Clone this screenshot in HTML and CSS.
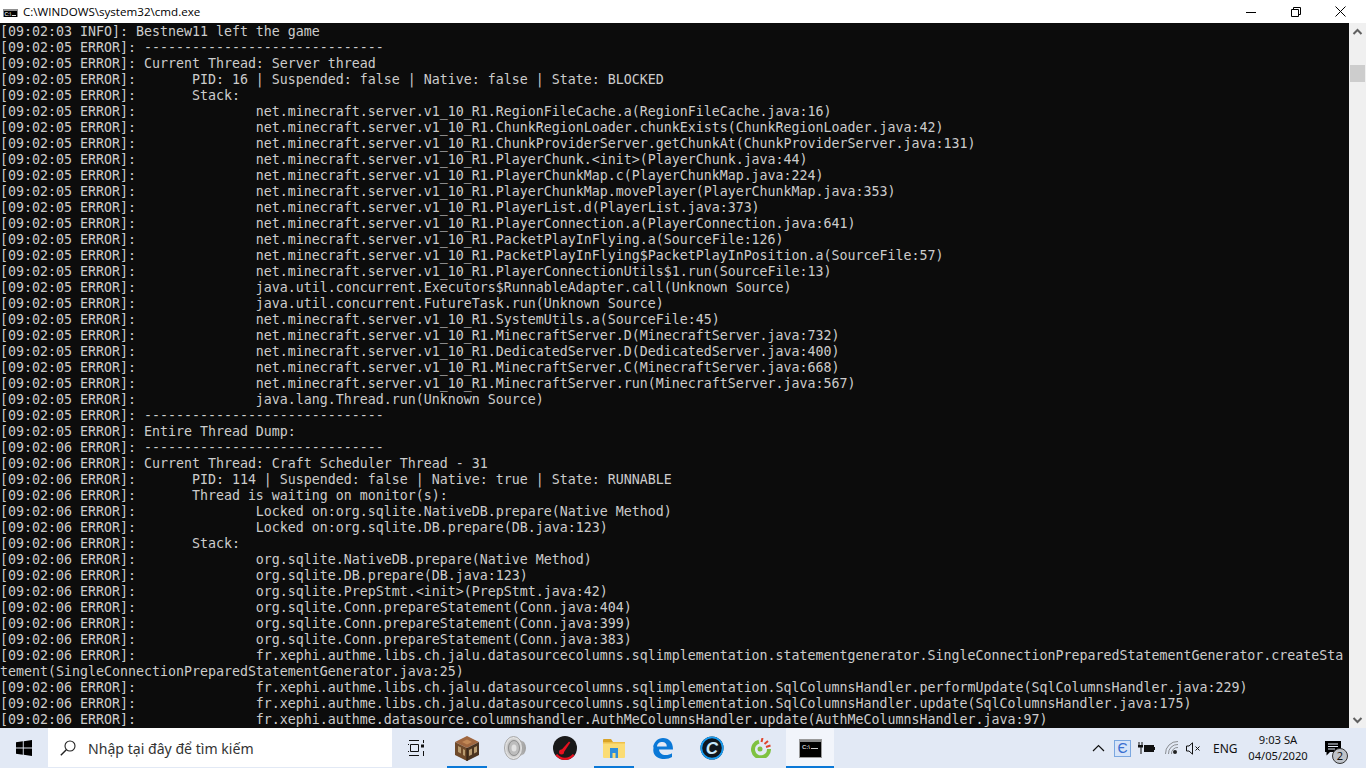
FILE: index.html
```html
<!DOCTYPE html>
<html lang="vi">
<head>
<meta charset="utf-8">
<title>cmd.exe</title>
<link rel="stylesheet" href="styles.css">
</head>
<body>
<div class="window">
  <header class="titlebar">
    <svg class="app-icon" viewBox="0 0 15 8" width="15" height="8"><rect width="15" height="8" fill="#8f8f8f"/><rect x="1" y="2" width="13" height="6" fill="#000"/><text x="1.500" y="7" font-size="5" font-family="Liberation Sans" font-weight="700" fill="#ddd">C:\</text><rect x="9" y="6" width="4" height="1" fill="#ddd"/></svg>
    <span class="title">C:\WINDOWS\system32\cmd.exe</span>
    <div class="controls">
      <span class="ctl"><svg width="10" height="10" viewBox="0 0 10 10"><path d="M0 5.500h10" stroke="#000" fill="none"/></svg></span>
      <span class="ctl"><svg width="10" height="10" viewBox="0 0 10 10"><path d="M.5 2.500h7v7h-7zM2.500 2.500v-2h7v7h-2" stroke="#000" fill="none"/></svg></span>
      <span class="ctl"><svg width="11" height="11" viewBox="0 0 11 11"><path d="M.5.5l10 10M10.500.5l-10 10" stroke="#000" fill="none"/></svg></span>
    </div>
  </header>
  <div class="client">
<pre class="console">[09:02:03 INFO]: Bestnew11 left the game
[09:02:05 ERROR]: ------------------------------
[09:02:05 ERROR]: Current Thread: Server thread
[09:02:05 ERROR]:       PID: 16 | Suspended: false | Native: false | State: BLOCKED
[09:02:05 ERROR]:       Stack:
[09:02:05 ERROR]:               net.minecraft.server.v1_10_R1.RegionFileCache.a(RegionFileCache.java:16)
[09:02:05 ERROR]:               net.minecraft.server.v1_10_R1.ChunkRegionLoader.chunkExists(ChunkRegionLoader.java:42)
[09:02:05 ERROR]:               net.minecraft.server.v1_10_R1.ChunkProviderServer.getChunkAt(ChunkProviderServer.java:131)
[09:02:05 ERROR]:               net.minecraft.server.v1_10_R1.PlayerChunk.&lt;init&gt;(PlayerChunk.java:44)
[09:02:05 ERROR]:               net.minecraft.server.v1_10_R1.PlayerChunkMap.c(PlayerChunkMap.java:224)
[09:02:05 ERROR]:               net.minecraft.server.v1_10_R1.PlayerChunkMap.movePlayer(PlayerChunkMap.java:353)
[09:02:05 ERROR]:               net.minecraft.server.v1_10_R1.PlayerList.d(PlayerList.java:373)
[09:02:05 ERROR]:               net.minecraft.server.v1_10_R1.PlayerConnection.a(PlayerConnection.java:641)
[09:02:05 ERROR]:               net.minecraft.server.v1_10_R1.PacketPlayInFlying.a(SourceFile:126)
[09:02:05 ERROR]:               net.minecraft.server.v1_10_R1.PacketPlayInFlying$PacketPlayInPosition.a(SourceFile:57)
[09:02:05 ERROR]:               net.minecraft.server.v1_10_R1.PlayerConnectionUtils$1.run(SourceFile:13)
[09:02:05 ERROR]:               java.util.concurrent.Executors$RunnableAdapter.call(Unknown Source)
[09:02:05 ERROR]:               java.util.concurrent.FutureTask.run(Unknown Source)
[09:02:05 ERROR]:               net.minecraft.server.v1_10_R1.SystemUtils.a(SourceFile:45)
[09:02:05 ERROR]:               net.minecraft.server.v1_10_R1.MinecraftServer.D(MinecraftServer.java:732)
[09:02:05 ERROR]:               net.minecraft.server.v1_10_R1.DedicatedServer.D(DedicatedServer.java:400)
[09:02:05 ERROR]:               net.minecraft.server.v1_10_R1.MinecraftServer.C(MinecraftServer.java:668)
[09:02:05 ERROR]:               net.minecraft.server.v1_10_R1.MinecraftServer.run(MinecraftServer.java:567)
[09:02:05 ERROR]:               java.lang.Thread.run(Unknown Source)
[09:02:05 ERROR]: ------------------------------
[09:02:05 ERROR]: Entire Thread Dump:
[09:02:06 ERROR]: ------------------------------
[09:02:06 ERROR]: Current Thread: Craft Scheduler Thread - 31
[09:02:06 ERROR]:       PID: 114 | Suspended: false | Native: true | State: RUNNABLE
[09:02:06 ERROR]:       Thread is waiting on monitor(s):
[09:02:06 ERROR]:               Locked on:org.sqlite.NativeDB.prepare(Native Method)
[09:02:06 ERROR]:               Locked on:org.sqlite.DB.prepare(DB.java:123)
[09:02:06 ERROR]:       Stack:
[09:02:06 ERROR]:               org.sqlite.NativeDB.prepare(Native Method)
[09:02:06 ERROR]:               org.sqlite.DB.prepare(DB.java:123)
[09:02:06 ERROR]:               org.sqlite.PrepStmt.&lt;init&gt;(PrepStmt.java:42)
[09:02:06 ERROR]:               org.sqlite.Conn.prepareStatement(Conn.java:404)
[09:02:06 ERROR]:               org.sqlite.Conn.prepareStatement(Conn.java:399)
[09:02:06 ERROR]:               org.sqlite.Conn.prepareStatement(Conn.java:383)
[09:02:06 ERROR]:               fr.xephi.authme.libs.ch.jalu.datasourcecolumns.sqlimplementation.statementgenerator.SingleConnectionPreparedStatementGenerator.createSta
tement(SingleConnectionPreparedStatementGenerator.java:25)
[09:02:06 ERROR]:               fr.xephi.authme.libs.ch.jalu.datasourcecolumns.sqlimplementation.SqlColumnsHandler.performUpdate(SqlColumnsHandler.java:229)
[09:02:06 ERROR]:               fr.xephi.authme.libs.ch.jalu.datasourcecolumns.sqlimplementation.SqlColumnsHandler.update(SqlColumnsHandler.java:175)
[09:02:06 ERROR]:               fr.xephi.authme.datasource.columnshandler.AuthMeColumnsHandler.update(AuthMeColumnsHandler.java:97)</pre>
    <aside class="scrollbar">
      <svg class="arrow" width="17" height="17" viewBox="0 0 17 17"><path d="M4.500 11l4-4 4 4" stroke="#606060" stroke-width="2" fill="none"/></svg>
      <div class="track"><div class="thumb"></div></div>
      <svg class="arrow" width="17" height="17" viewBox="0 0 17 17"><path d="M4.500 7l4 4 4-4" stroke="#606060" stroke-width="2" fill="none"/></svg>
    </aside>
  </div>
  <footer class="taskbar">
    <button class="start"><svg width="16" height="16" viewBox="0 0 16 16"><path d="M0 2.300L6.800 1.300V7.600H0zM7.700 1.200L16 0V7.600H7.700zM0 8.400H6.800V14.700L0 13.700zM7.700 8.400H16V16L7.700 14.800z" fill="#000"/></svg></button>
    <div class="search">
      <svg width="16" height="16" viewBox="0 0 16 16"><circle cx="10" cy="6" r="5" fill="none" stroke="#222" stroke-width="1.100"/><path d="M6.300 9.700L.8 15.300" stroke="#222" stroke-width="1.400"/></svg>
      <span>Nhập tại đây để tìm kiếm</span>
    </div>
    <div class="apps">
      <span class="app task-view"><svg width="16" height="16" viewBox="0 0 16 16"><path d="M1 .5h10M1 15.500h10M2.500 4.500h8v7h-8zM0 4.500h1M0 11.500h1M15.500 0v3M15.500 11v5" fill="none" stroke="#111"/><rect x="13" y="4.500" width="3" height="3" fill="#111"/></svg></span>
      <span class="app open"><svg width="24" height="25" viewBox="0 0 24 25"><path d="M12 0l12 6-12 6L0 6z" fill="#a0673f"/><path d="M0 6l12 6v13L0 19z" fill="#6f4a2a"/><path d="M24 6l-12 6v13l12-6z" fill="#4b3420"/><path d="M3 10l3 1.500v6L3 16zM8 13l2 1v6l-2-1zM14 14l3-1.500v6l-3 1.500zM19 11.500l3-1.500v6l-3 1.500z" fill="#b79a6e"/><path d="M7 6l5 2.500L17 6l-5-2.500z" fill="#c08755"/><path d="M12 12v13" stroke="#2a1c10"/></svg></span>
      <span class="app"><svg width="24" height="24" viewBox="0 0 24 24"><defs><linearGradient id="sb" x1="0" x2="1"><stop offset="0" stop-color="#d8d8d8"/><stop offset="1" stop-color="#9d9d9d"/></linearGradient><radialGradient id="sp"><stop offset="0" stop-color="#e6e6e6"/><stop offset=".55" stop-color="#b4b4b4"/><stop offset="1" stop-color="#f2f2f2"/></radialGradient></defs><path d="M10 1l10 5q4 6 0 12l-10 5z" fill="url(#sb)"/><ellipse cx="9.500" cy="12" rx="9" ry="11.500" fill="url(#sp)" stroke="#a5a5a5"/><ellipse cx="10" cy="12" rx="5.500" ry="7.500" fill="#bdbdbd" stroke="#8f8f8f"/><ellipse cx="10" cy="12" rx="2.500" ry="3.500" fill="#e2e2e2"/></svg></span>
      <span class="app"><svg width="24" height="24" viewBox="0 0 24 24"><circle cx="12" cy="12" r="12" fill="#191919"/><path d="M2.500 19.300a12 12 0 0 0 19 0l-1.700-1.200a10 10 0 0 1-15.600 0z" fill="#e8101f"/><path d="M7.500 15l8.500-9.500 1.300 1L10 17.500z" fill="#e8101f"/><circle cx="8.500" cy="16" r="2.500" fill="#e8101f"/></svg></span>
      <span class="app open"><svg width="22" height="19" viewBox="0 0 22 19"><path d="M0 1q0-1 1-1h7l2 3H0z" fill="#d9a326"/><path d="M0 3h22v15q0 1-1 1H1q-1 0-1-1z" fill="#fbdc74"/><path d="M0 3h22v1.500H0z" fill="#eec04a"/><path d="M7 9h8v10h-2.500v-5h-3v5H7z" fill="#2f8edb"/></svg></span>
      <span class="app"><svg width="21" height="21" viewBox="0 0 21 21"><path d="M1 10C1.500 4 6 0 11 0c6 0 10 4 10 11.500H7c.3 3.500 3 5.500 6.500 5.500 2.500 0 5-.8 6.500-1.800v3.800C18 20.300 15.500 21 12.500 21 5 21-.5 16 1.800 9 3 5.800 5 4.800 7.500 4.200 5.500 6 5 7.300 5 8.500h9.800C14.800 5.500 13 4 10.500 4 6.500 4 3 6.500 1 10z" fill="#0a78d7"/></svg></span>
      <span class="app"><svg width="24" height="24" viewBox="0 0 24 24"><circle cx="12" cy="12" r="11.500" fill="#10171e"/><circle cx="12" cy="12" r="10.700" fill="none" stroke="#1a9cf0" stroke-width="1.800"/><text x="12" y="18" text-anchor="middle" font-family="Liberation Sans" font-weight="700" font-style="italic" font-size="17" fill="#c8e8fb">C</text></svg></span>
      <span class="app"><svg width="20" height="20" viewBox="0 0 20 20"><path d="M8 3.600A8 8 0 1 0 18 11" fill="none" stroke="#7fc241" stroke-width="4"/><circle cx="9" cy="11" r="2.500" fill="#7fc241"/><path d="M10.500 4l1-4M13.500 6l3.500-3M15 9l4.500-1.500" stroke="#e0452c" stroke-width="2"/></svg></span>
      <span class="app active open"><svg width="23" height="19" viewBox="0 0 23 19"><rect x=".5" y=".5" width="22" height="18" fill="#000" stroke="#9a9a9a"/><rect x="1" y="1" width="21" height="2" fill="#8a8a8a"/><text x="3" y="10" font-size="6" font-family="Liberation Sans" font-weight="700" fill="#ccc">C:\</text><rect x="12" y="9" width="7" height="1" fill="#ccc"/></svg></span>
    </div>
    <div class="tray">
      <svg class="t-chevron" width="13" height="8" viewBox="0 0 13 8"><path d="M1 7l5.500-5.500L12 7" fill="none" stroke="#111" stroke-width="1.200"/></svg>
      <span class="t-e">Є</span>
      <svg class="t-batt" width="17" height="12" viewBox="0 0 17 12"><path d="M0 3h5v2.500H3.500v6.500h-1V5.500H0z" fill="#111"/><path d="M1 0v3M4 0v3" stroke="#111"/><rect x="6" y="3" width="10" height="7" fill="#111"/><rect x="16" y="5" width="1" height="3" fill="#111"/></svg>
      <svg class="t-wifi" width="14" height="14" viewBox="0 0 14 14"><path d="M.5 13A12 12 0 0 1 13 .5M3.500 13A9 9 0 0 1 13 3.500M6.500 13A6 6 0 0 1 13 6.500" fill="none" stroke="#8a8d92"/><circle cx="10" cy="11" r="2" fill="#222"/></svg>
      <svg class="t-vol" width="15" height="13" viewBox="0 0 15 13"><path d="M.5 4H3L6.500.8V12.200L3 9H.5z" fill="none" stroke="#111"/><path d="M9.500 4.500l4 4M13.500 4.500l-4 4" stroke="#111"/></svg>
      <span class="t-lang">ENG</span>
      <div class="t-clock"><span>9:03 SA</span><span>04/05/2020</span></div>
      <span class="t-note"><svg width="17" height="15" viewBox="0 0 17 15"><path d="M0 0h16v11H5l-3.500 3.500V11H0z" fill="#000"/><path d="M3 3h10M3 5.500h10M3 8h7" stroke="#e3eaf5"/></svg><b class="badge">2</b></span>
    </div>
  </footer>
</div>
</body>
</html>
```
FILE: styles.css
```css
html, body { margin: 0; padding: 0; width: 1366px; height: 768px; overflow: hidden; }
.window { display: flex; flex-direction: column; width: 1366px; height: 768px; font-family: "Noto Sans", "Open Sans", sans-serif; }
.titlebar { display: flex; align-items: center; height: 23px; background: #fff; flex: none; }
.app-icon { margin-left: 3px; margin-right: 5px; margin-top: 3px; }
.title { font-size: 11.6px; color: #000; font-family: "Open Sans", "Noto Sans", sans-serif; }
.controls { margin-left: auto; margin-right: 3px; display: flex; }
.ctl { width: 45px; height: 20px; display: flex; align-items: center; justify-content: center; }
.client { display: flex; height: 705px; flex: none; background: #0c0c0c; }
.console { flex: 1; margin: 0; padding: 1px 0 0; overflow: hidden; color: #cccccc; font-family: "DejaVu Sans Mono", monospace; font-size: 13.29px; line-height: 16px; }
.scrollbar { width: 17px; background: #f0f0f0; display: flex; flex-direction: column; flex: none; }
.arrow { flex: none; }
.track { flex: 1; padding-top: 25px; }
.thumb { height: 17px; margin: 0 1px; background: #cdcdcd; }
.taskbar { display: flex; align-items: center; height: 40px; flex: none; background: #e2e9f5; }
.start { width: 48px; height: 40px; border: 0; padding: 0; background: transparent; display: flex; align-items: center; justify-content: center; }
.search { align-self: flex-start; width: 344px; height: 39px; padding: 1px 0 0 12px; background: #fff; display: flex; align-items: center; gap: 12px; box-sizing: border-box; font-size: 14.1px; color: #333; }
.apps { display: flex; height: 40px; }
.app { width: 49px; height: 40px; display: flex; align-items: center; justify-content: center; position: relative; box-sizing: border-box; }
.task-view { width: 50px; justify-content: flex-start; padding-left: 16px; }
.app svg { display: block; }
.open::after { content: ""; position: absolute; left: 5px; right: 4px; bottom: 0; height: 2px; background: #0a78d7; }
.active { width: 48px; margin-left: 1px; background: #f2f5fb; }
.active::after { left: 0; right: 0; }
.tray { margin-left: auto; display: flex; align-items: center; height: 40px; color: #111; }
.t-chevron { margin-right: 9px; }
.t-e { width: 15px; height: 15px; background: #d6e4f8; border: 1px solid #7aa7e0; color: #3a6fd0; font: 14px/15px "Liberation Sans", sans-serif; text-align: center; margin-right: 7px; }
.t-batt { margin-right: 10px; }
.t-wifi { margin-right: 7px; }
.t-vol { margin-right: 12px; }
.t-lang { font-size: 12px; margin-right: 10px; width: 23px; }
.t-clock { display: flex; flex-direction: column; align-items: center; font-size: 11.2px; line-height: 16px; width: 64px; margin-right: 14px; }
.t-note { position: relative; width: 42px; height: 40px; display: flex; align-items: center; padding-left: 1px; box-sizing: border-box; }
.badge { position: absolute; left: 8px; top: 20px; width: 16px; height: 16px; box-sizing: border-box; border-radius: 50%; border: 1px solid #333; background: #bfc3c9; font-size: 11px; font-weight: 400; line-height: 14px; text-align: center; }
```
